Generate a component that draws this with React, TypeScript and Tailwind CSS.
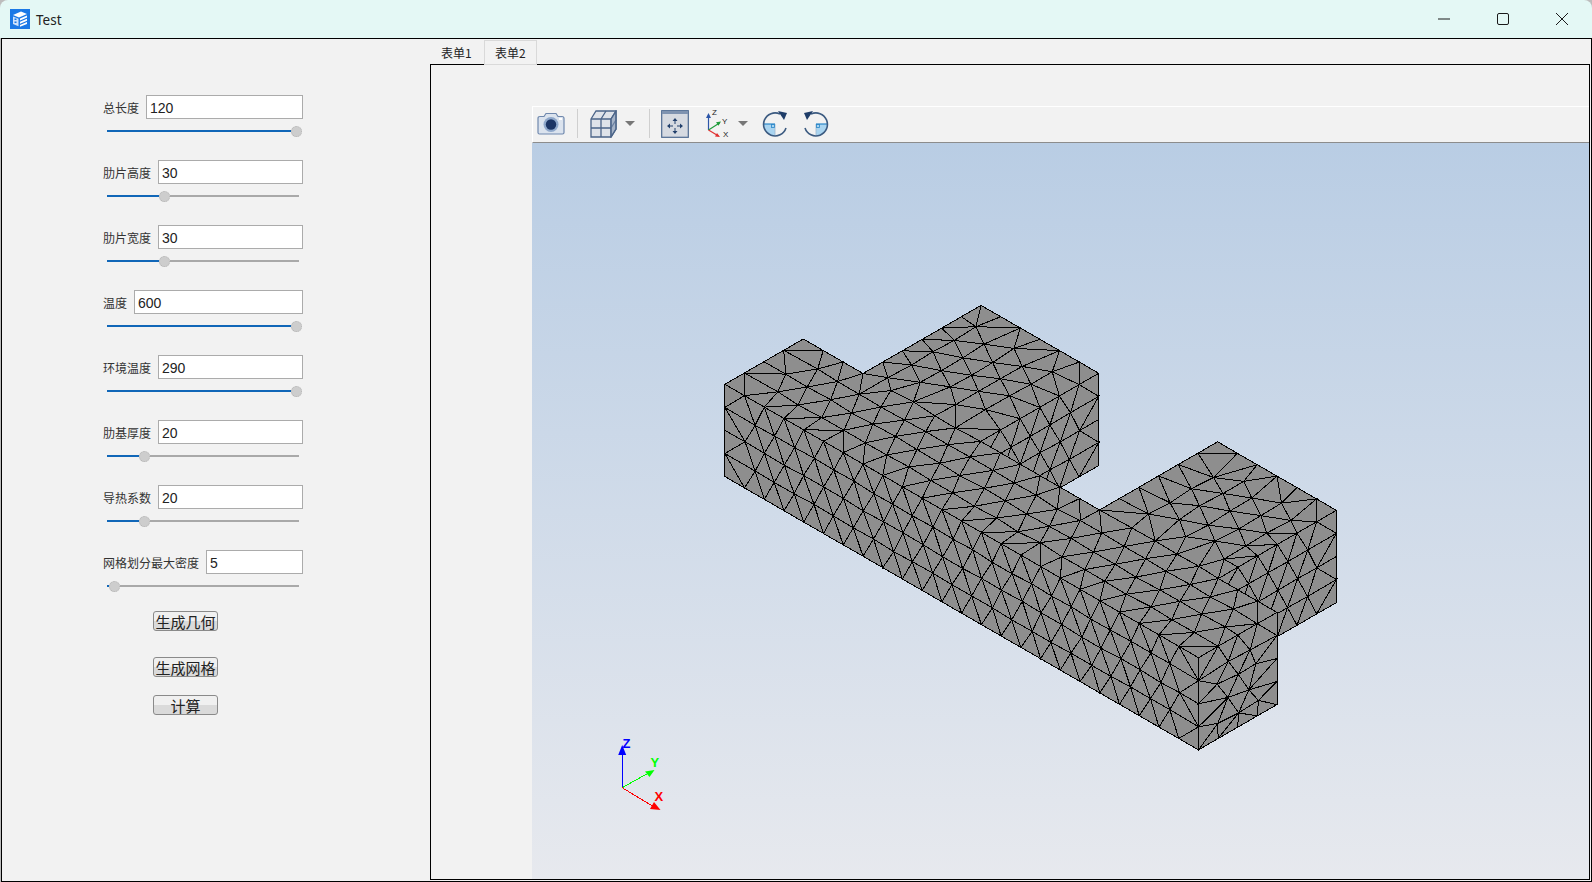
type P = [number, number];

const fields = [
  { label: "总长度", value: "120", thumb: 296 },
  { label: "肋片高度", value: "30", thumb: 164 },
  { label: "肋片宽度", value: "30", thumb: 164 },
  { label: "温度", value: "600", thumb: 296 },
  { label: "环境温度", value: "290", thumb: 296 },
  { label: "肋基厚度", value: "20", thumb: 144 },
  { label: "导热系数", value: "20", thumb: 144 },
  { label: "网格划分最大密度", value: "5", thumb: 114 },
];

const H = 28;
let seed = 12345;
const rnd = () => {
  seed = (seed * 16807) % 2147483647;
  return seed / 2147483647;
};

const inPoly = (p: P, poly: P[]) => {
  let c = false;
  for (let i = 0, j = poly.length - 1; i < poly.length; j = i++) {
    const [xi, yi] = poly[i];
    const [xj, yj] = poly[j];
    if (yi > p[1] !== yj > p[1] && p[0] < ((xj - xi) * (p[1] - yi)) / (yj - yi) + xi) c = !c;
  }
  return c;
};

const segDist = (p: P, a: P, b: P) => {
  const dx = b[0] - a[0];
  const dy = b[1] - a[1];
  const t = Math.max(0, Math.min(1, ((p[0] - a[0]) * dx + (p[1] - a[1]) * dy) / (dx * dx + dy * dy)));
  return Math.hypot(p[0] - a[0] - t * dx, p[1] - a[1] - t * dy);
};

// plain Bowyer-Watson, good enough for a few hundred nodes
function delaunay(pts: P[]) {
  const all: P[] = pts.map((p) => [p[0] + rnd() * 0.02, p[1] + rnd() * 0.02]);
  const n = all.length;
  all.push([-1e5, -1e5], [1e5, -1e5], [0, 1e5]);
  let tris: number[][] = [[n, n + 1, n + 2]];
  const inCircle = (t: number[], p: P) => {
    const [ax, ay] = all[t[0]];
    const [bx, by] = all[t[1]];
    const [cx, cy] = all[t[2]];
    const d = 2 * (ax * (by - cy) + bx * (cy - ay) + cx * (ay - by));
    const a2 = ax * ax + ay * ay;
    const b2 = bx * bx + by * by;
    const c2 = cx * cx + cy * cy;
    const ux = (a2 * (by - cy) + b2 * (cy - ay) + c2 * (ay - by)) / d;
    const uy = (a2 * (cx - bx) + b2 * (ax - cx) + c2 * (bx - ax)) / d;
    return Math.hypot(p[0] - ux, p[1] - uy) < Math.hypot(ax - ux, ay - uy);
  };
  for (let i = 0; i < n; i++) {
    const bad = tris.filter((t) => inCircle(t, all[i]));
    const count = new Map<string, number[]>();
    const seen = new Map<string, number>();
    bad.forEach((t) => {
      [[t[0], t[1]], [t[1], t[2]], [t[2], t[0]]].forEach((e) => {
        const k = Math.min(e[0], e[1]) + "_" + Math.max(e[0], e[1]);
        seen.set(k, (seen.get(k) || 0) + 1);
        count.set(k, e);
      });
    });
    tris = tris.filter((t) => !bad.includes(t));
    seen.forEach((c, k) => {
      if (c === 1) {
        const e = count.get(k)!;
        tris.push([e[0], e[1], i]);
      }
    });
  }
  return tris.filter((t) => t.every((v) => v < n));
}

type Lattice = { keep: (p: P) => boolean; e1: P; e2: P; jitter: number };

function buildFace(poly: P[], lattices: Lattice[], project: (p: P) => P) {
  const nodes: P[] = [];
  poly.forEach((a, i) => {
    const b = poly[(i + 1) % poly.length];
    const len = Math.hypot(b[0] - a[0], b[1] - a[1]);
    const steps = Math.max(1, Math.round(len / H));
    for (let k = 0; k < steps; k++) {
      nodes.push([a[0] + ((b[0] - a[0]) * k) / steps, a[1] + ((b[1] - a[1]) * k) / steps]);
    }
  });
  const nb = nodes.length;
  lattices.forEach((l) => {
    for (let i = -60; i < 60; i++) {
      for (let j = -60; j < 60; j++) {
        const p: P = [
          poly[0][0] + i * l.e1[0] + j * l.e2[0] + (rnd() - 0.5) * l.jitter,
          poly[0][1] + i * l.e1[1] + j * l.e2[1] + (rnd() - 0.5) * l.jitter,
        ];
        if (!inPoly(p, poly) || !l.keep(p)) continue;
        if (poly.some((a, k) => segDist(p, a, poly[(k + 1) % poly.length]) < H * 0.6)) continue;
        if (nodes.slice(nb).some((q) => Math.hypot(q[0] - p[0], q[1] - p[1]) < H * 0.75)) continue;
        nodes.push(p);
      }
    }
  });
  let d = "";
  delaunay(nodes).forEach((t) => {
    const [a, b, c] = t.map((v) => nodes[v]);
    const area = Math.abs((b[0] - a[0]) * (c[1] - a[1]) - (c[0] - a[0]) * (b[1] - a[1])) / 2;
    const mid: P = [(a[0] + b[0] + c[0]) / 3, (a[1] + b[1] + c[1]) / 3];
    if (area < 20 || !inPoly(mid, poly)) return;
    const s = [a, b, c].map(project);
    d += `M${s[0][0].toFixed(1)} ${s[0][1].toFixed(1)}L${s[1][0].toFixed(1)} ${s[1][1].toFixed(1)}L${s[2][0].toFixed(1)} ${s[2][1].toFixed(1)}Z`;
  });
  return d;
}

// isometric view of the finned block: u along the strip, v along the fins, z downward
const iso = (u: number, v: number, z: number): P => [
  724.3 + 0.707 * (u + v),
  384.3 + 0.408 * (u - v) + 0.816 * z,
];

const rowLattice = (pitch: number): Lattice => ({ keep: () => true, e1: [H, 0], e2: [H / 2, pitch], jitter: 2 });

const meshPaths = [
  buildFace([[111, 0], [278, 0], [278, 113], [111, 113]], [rowLattice(28.25)], (p) => iso(251, p[0], p[1])),
  buildFace([[111, 0], [278, 0], [278, 113], [111, 113]], [rowLattice(28.25)], (p) => iso(587, p[0], p[1])),
  buildFace(
    [[0, 0], [0, 111], [84.5, 111], [84.5, 278], [251, 278], [251, 111], [419, 111], [419, 278], [587, 278], [587, 111], [670, 111], [670, 0]],
    [
      { keep: (p) => p[1] < 118, e1: [31, 0], e2: [15.5, 27.75], jitter: 3 },
      { keep: (p) => p[1] >= 118, e1: [0, 31], e2: [27, 15.5], jitter: 3 },
    ],
    (p) => iso(p[0], p[1], 0),
  ),
  buildFace([[0, 0], [670, 0], [670, 113], [0, 113]], [rowLattice(28.25)], (p) => iso(p[0], 0, p[1])),
  buildFace([[0, 0], [111, 0], [111, 113], [0, 113]], [{ keep: () => true, e1: [H, 0], e2: [H / 2, 24.2], jitter: 6 }], (p) => iso(670, p[0], p[1])),
];

function AppIcon() {
  return (
    <svg viewBox="0 0 20 20" className="w-5 h-5 shrink-0">
      <rect width="20" height="20" fill="#1b79e6" />
      <path d="M3 6l8-3.500 6 2.500-8 3.500z" fill="#fff" />
      <path d="M3 7.500l5.500 2.200v7.600L3 15z" fill="#cfe3fb" />
      <path d="M10 9.500l7-3v2l-7 3zM10 12.800l7-3v2l-7 3zM10 16.100l7-3v2l-7 2.600z" fill="#fff" />
      <path d="M4.500 9.500h2v1.500h-2zM4.500 12.500h2V14h-2z" fill="#1b79e6" />
    </svg>
  );
}

function CameraIcon() {
  return (
    <svg viewBox="0 0 28 23" className="w-[28px] h-[23px] ml-[4px] shrink-0">
      <path d="M1 6.500q0-2 2-2h4l2-3h10l2 3h4q2 0 2 2v14q0 1.500-1.500 1.500h-23q-1.500 0-1.500-1.500z" fill="#dbe3ee" stroke="#6f88ad" strokeWidth="1.2" />
      <circle cx="14" cy="12.500" r="7.500" fill="#8fa8cb" />
      <circle cx="14" cy="12.500" r="5.200" fill="#1c3565" />
      <rect x="22" y="6" width="3" height="2" fill="#fff" />
    </svg>
  );
}

function CubeIcon() {
  return (
    <svg viewBox="0 0 27 28" className="w-[27px] h-[28px] ml-[12px] shrink-0" fill="none" stroke="#4b6488" strokeWidth="1.3">
      <path d="M1 9l5-8h20v18l-5 8H1z" fill="#dfe3e9" />
      <path d="M1 9h20v18M21 9l5-8M11 9v18M1 18h20M16 1l-5 8M21 18l5-8" />
      <path d="M21 9l5-8v18l-5 8z" fill="#7e93b0" fillOpacity="0.6" />
    </svg>
  );
}

function Caret({ ml }: { ml: string }) {
  return (
    <svg viewBox="0 0 10 5" className={`w-[10px] h-[5px] shrink-0 ${ml}`}>
      <path d="M0 0h10L5 5z" fill="#777" />
    </svg>
  );
}

function FitIcon() {
  return (
    <svg viewBox="0 0 28 28" className="w-[28px] h-[28px] ml-[11px] shrink-0">
      <rect x="0.700" y="0.700" width="26.600" height="26.600" fill="#d6dae1" stroke="#4e6a90" strokeWidth="1.2" />
      <rect x="1" y="1" width="26" height="3" fill="#7f93b0" />
      <path d="M14 8l-2.500 3h5zM14 24l-2.500-3h5zM6 16l3-2.500v5zM22 16l-3-2.500v5z" fill="#22406c" />
      <path d="M14 10v4M14 18v4M8 16h4M16 16h4" stroke="#22406c" strokeWidth="1" />
    </svg>
  );
}

function AxesIcon() {
  return (
    <svg viewBox="0 0 27 29" className="w-[27px] h-[29px] ml-[16px] shrink-0">
      <path d="M3.500 21V6" stroke="#2c56a8" strokeWidth="1.2" />
      <path d="M3.500 4l-2.500 5h5z" fill="#2c56a8" />
      <path d="M3.500 21l11-7" stroke="#1f9c3a" strokeWidth="1.2" />
      <path d="M16 12.500l-5 .8 2.500 3.500z" fill="#1f9c3a" />
      <path d="M3.500 21l10 6" stroke="#e03030" strokeWidth="1.2" />
      <path d="M15 28l-5-.5 2-3.500z" fill="#e03030" />
      <text x="7" y="6" fontSize="8" fill="#222" fontFamily="Liberation Sans, sans-serif">Z</text>
      <text x="17" y="15" fontSize="8" fill="#222" fontFamily="Liberation Sans, sans-serif">Y</text>
      <text x="18" y="28" fontSize="8" fill="#222" fontFamily="Liberation Sans, sans-serif">X</text>
    </svg>
  );
}

function RotateIcon({ flip, ml }: { flip?: boolean; ml: string }) {
  return (
    <svg viewBox="0 0 26 26" className={`w-[26px] h-[26px] shrink-0 ${ml} ${flip ? "-scale-x-100" : ""}`}>
      <path d="M1.500 13h11.500v11.500A11.500 11.500 0 0 1 1.500 13z" fill="#a9d4f0" />
      <path d="M1 13h12" stroke="#2a86c8" strokeWidth="1.2" />
      <path d="M13 13v12" stroke="#9fb6cc" strokeWidth="0.8" />
      <rect x="9.500" y="13.500" width="3" height="3" fill="none" stroke="#2a86c8" strokeWidth="0.8" />
      <path d="M18 3A11.500 11.500 0 1 0 24 17" fill="none" stroke="#3b5a80" strokeWidth="1.600" />
      <path d="M16 0l9 2-3 7z" fill="#1f3d68" />
    </svg>
  );
}

function Separator({ ml }: { ml: string }) {
  return <div className={`w-px h-[29px] bg-[#cfcfcf] shrink-0 ${ml}`} />;
}

function Slider({ thumb }: { thumb: number }) {
  return (
    <div className="flex items-center h-3 ml-1 w-[192px]">
      <div className="h-[2px] bg-[#1167b8] shrink-0" style={{ width: thumb - 107 - 5.5 }} />
      <div className="w-[11px] h-[11px] rounded-full bg-[#cdcdcd] border border-dotted border-[#b4b4b4] shrink-0" />
      <div className="h-[2px] bg-[#a9a9a9] flex-1" />
    </div>
  );
}

function PushButton({ text, className }: { text: string; className: string }) {
  return (
    <button className={`w-[65px] h-5 ml-[50px] border border-[#8a8a8a] rounded-[3px] bg-[linear-gradient(#f0f0f0_50%,#dadada_50%)] text-[15px] leading-[17px] text-[#222] block ${className}`}>
      {text}
    </button>
  );
}

export default function App() {
  return (
    <div className="w-[1592px] h-[882px] bg-[#bdbdbd] overflow-hidden" style={{ fontFamily: '"Noto Sans CJK SC", "Noto Sans", sans-serif' }}>
      <div className="h-full flex flex-col rounded-t-lg overflow-hidden">
        <div className="h-[38px] bg-[#e4f8f5] flex items-center pl-[10px] pr-[1px] shrink-0">
          <AppIcon />
          <span className="ml-[6px] pt-[2px] text-[13.5px] text-[#222]" style={{ fontFamily: '"Noto Sans", sans-serif' }}>Test</span>
          <div className="ml-auto flex h-full">
            <div className="w-[58px] flex items-center justify-center">
              <svg viewBox="0 0 12 12" className="w-3 h-3"><path d="M0 6h12" stroke="#1a1a1a" strokeWidth="1" /></svg>
            </div>
            <div className="w-[59px] flex items-center justify-center">
              <svg viewBox="0 0 12 12" className="w-3 h-3"><rect x="0.500" y="0.500" width="11" height="11" rx="1.500" fill="none" stroke="#1a1a1a" strokeWidth="1" /></svg>
            </div>
            <div className="w-[59px] flex items-center justify-center">
              <svg viewBox="0 0 12 12" className="w-3 h-3"><path d="M0 0l12 12M12 0L0 12" stroke="#1a1a1a" strokeWidth="1" /></svg>
            </div>
          </div>
        </div>

        <div className="flex-1 min-h-0 ml-px flex bg-[#f2f2f2] border border-black">
          <div className="w-[428px] shrink-0 pl-[101px] pt-[56px]">
            <div className="w-[200px] flex flex-col gap-[23px]">
              {fields.map((f) => (
                <div key={f.label} className="flex flex-col gap-[6px]">
                  <div className="flex items-center gap-[7px] h-6">
                    <span className="text-[12px] pt-[2px] text-[#333] whitespace-nowrap">{f.label}</span>
                    <input
                      readOnly
                      value={f.value}
                      className="flex-1 min-w-0 h-6 bg-white border border-[#ababab] px-[3px] pt-[2px] text-[14px] text-[#222] outline-none"
                      style={{ fontFamily: '"Liberation Sans", sans-serif' }}
                    />
                  </div>
                  <Slider thumb={f.thumb} />
                </div>
              ))}
            </div>
            <PushButton text="生成几何" className="mt-[19px]" />
            <PushButton text="生成网格" className="mt-[26px]" />
            <PushButton text="计算" className="mt-[18px]" />
          </div>

          <div className="flex-1 min-w-0 flex flex-col pr-px pb-px">
            <div className="h-[25px] flex shrink-0 text-[12px] text-[#222]">
              <div className="w-[54px] pl-[11px] pt-[5px]">表单1</div>
              <div className="relative z-10 w-[53px] h-[25px] mt-px bg-[#f2f2f2] border border-[#d9d9d9] pl-[10px] pt-[3px]">表单2</div>
            </div>
            <div className="flex-1 min-h-0 border border-black flex flex-col pl-[101px] pt-[41px]">
              <div className="h-[37px] shrink-0 pb-[2px] bg-[#f2f2f2] border-t border-l border-white border-b-[#8c8c8c] border-b flex items-center">
                <CameraIcon />
                <Separator ml="ml-[12px]" />
                <CubeIcon />
                <Caret ml="ml-[8px]" />
                <Separator ml="ml-[14px]" />
                <FitIcon />
                <AxesIcon />
                <Caret ml="ml-[6px]" />
                <RotateIcon ml="ml-[14px]" />
                <RotateIcon flip ml="ml-[15px]" />
              </div>
              <div className="flex-1 min-h-0 bg-gradient-to-b from-[#b9cde4] to-[#e7e9ee]">
                <svg viewBox="532 143 1056 736" className="block w-full h-full">
                  {meshPaths.map((d, i) => (
                    <path key={i} d={d} fill="#8e8e8e" stroke="#000" strokeWidth="1" shapeRendering="crispEdges" />
                  ))}
                  <g shapeRendering="crispEdges" strokeWidth="1">
                    <path d="M621.700 787.700V752" stroke="#0000ff" />
                    <path d="M621.700 787.700L648 773" stroke="#00ff00" />
                    <path d="M621.700 787.700L652 806" stroke="#ff0000" />
                  </g>
                  <path d="M621.700 745l-4 10h8z" fill="#0000ff" />
                  <path d="M654 770l-9.500 1.500 4.500 5.500z" fill="#00ff00" />
                  <path d="M660 810l-10.500-1 4-7z" fill="#ff0000" />
                  <g fontSize="13" fontWeight="bold" fontFamily="Liberation Sans, sans-serif">
                    <text x="622" y="748" fill="#0000ff">Z</text>
                    <text x="650" y="767" fill="#00ff00">Y</text>
                    <text x="654" y="801" fill="#ff0000">X</text>
                  </g>
                </svg>
              </div>
            </div>
          </div>
        </div>
      </div>
    </div>
  );
}
